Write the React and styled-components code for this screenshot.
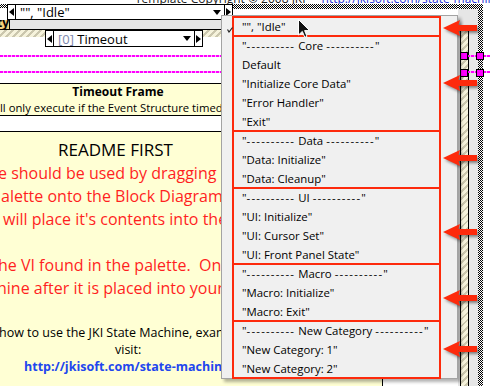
import React from 'react';
import styled, { createGlobalStyle } from 'styled-components';

const UI = '"Open Sans", "Noto Sans", "DejaVu Sans", sans-serif';
const RED = '#fd2a0c';
const NOTE = '#ffffd4';

const GlobalStyle = createGlobalStyle`
  html, body {
    margin: 0;
    padding: 0;
    background: #fff;
  }
  body {
    width: 490px;
    height: 386px;
    overflow: hidden;
    font-family: ${UI};
  }
`;

const checker = `
  background-color: #fff;
  background-image: repeating-conic-gradient(#000 0 25%, #fff 0 50%);
  background-size: 2px 2px;
`;

const hatch = `
  background: repeating-linear-gradient(135deg, #f6f3dc 0 3px, #cbc7ae 3px 5px);
`;

const Stage = styled.div`
  position: relative;
  width: 490px;
  height: 386px;
  overflow: hidden;
  display: flex;
  flex-direction: column;
`;

const TopStrip = styled.div`
  height: 4px;
  display: flex;
  align-items: flex-end;
  gap: 16px;
  padding-left: 135px;
  overflow: hidden;
  white-space: nowrap;
  font-size: 12px;
  line-height: 11px;
`;

const CopyText = styled.span`
  color: #222;
`;

const CopyLink = styled.span`
  color: #2b35d6;
`;

const Body = styled.div`
  flex: 1;
  display: flex;
  min-height: 0;
`;

const LeftPane = styled.div`
  width: 458px;
  display: flex;
  flex-direction: column;
  overflow: hidden;
`;

const SelectorRow = styled.div`
  height: 16px;
  display: flex;
  align-items: flex-start;
`;

const CornerChecker = styled.div`
  ${checker}
  width: 7px;
  height: 4px;
`;

const TopChecker = styled.div`
  ${checker}
  flex: 1;
  height: 5px;
`;

const Selector = styled.div`
  width: ${p => p.$width}px;
  height: ${p => p.$height}px;
  box-sizing: border-box;
  display: flex;
  border: 1px solid #000;
  background: #fff;
  flex-shrink: 0;
`;

const StepButton = styled.div`
  width: 7px;
  display: flex;
  align-items: center;
  justify-content: center;
  ${p => (p.$dir === 'left' ? 'border-right: 1px solid #000;' : 'border-left: 1px solid #000;')}
  &::before {
    content: '';
    border-top: 4px solid transparent;
    border-bottom: 4px solid transparent;
    ${p => (p.$dir === 'left' ? 'border-right: 5px solid #000;' : 'border-left: 5px solid #000;')}
  }
`;

const Field = styled.div`
  flex: 1;
  display: flex;
  align-items: center;
  justify-content: space-between;
  padding: 0 3px 0 4px;
  font-size: 13px;
  white-space: nowrap;
  color: #000;
  &::after {
    content: '';
    border-left: 4px solid transparent;
    border-right: 4px solid transparent;
    border-top: 5px solid #000;
  }
`;

const Index = styled.span`
  color: #7d87ad;
`;

const BarRow = styled.div`
  height: 10px;
  display: flex;
`;

const TyLabel = styled.div`
  width: 10px;
  box-sizing: border-box;
  background: #f2d27c;
  border-right: 1px solid #000;
  border-bottom: 1px solid #000;
  font-size: 12px;
  font-weight: 700;
  line-height: 5px;
  overflow: hidden;
  color: #000;
  display: flex;
  justify-content: flex-end;
`;

const GrayBar = styled.div`
  flex: 1;
  background: #e4e4e4;
  border-bottom: 1px solid #000;
`;

const TimeoutRow = styled.div`
  height: 17px;
  display: flex;
  align-items: flex-start;
`;

const HatchStrip = styled.div`
  ${hatch}
  height: 7px;
  ${p => (p.$width ? `width: ${p.$width}px;` : 'flex: 1;')}
`;

const WireArea = styled.div`
  height: 36px;
  box-sizing: border-box;
  padding-top: 8px;
  display: flex;
  flex-direction: column;
  gap: 14px;
`;

const Wire = styled.div`
  height: 2px;
  background: repeating-linear-gradient(90deg, #ff00ff 0 3px, #ffb3ff 3px 4px);
`;

const TimeoutFrame = styled.div`
  height: 33px;
  width: 383px;
  box-sizing: border-box;
  background: ${NOTE};
  border-top: 1px solid #000;
  border-bottom: 1px solid #000;
  border-right: 1px solid #000;
  font-size: 11.3px;
  line-height: 15.5px;
  color: #000;
  white-space: nowrap;
`;

const FrameTitle = styled.div`
  width: 236px;
  text-align: center;
  font-size: 12px;
  font-weight: 700;
`;

const Gap = styled.div`
  height: ${p => p.$h}px;
`;

const Readme = styled.div`
  flex: 1;
  width: 383px;
  box-sizing: border-box;
  background: ${NOTE};
  border-top: 1px solid #000;
  border-right: 1px solid #000;
  padding-top: 6px;
  white-space: pre;
  color: #000;
`;

const ReadmeTitle = styled.div`
  padding-left: 58px;
  font-size: 17px;
  line-height: 24px;
`;

const RedLine = styled.div`
  margin-left: ${p => p.$indent || 0}px;
  margin-top: ${p => p.$gap || 0}px;
  color: #ff1f1f;
  font-size: 16px;
  line-height: 23px;
`;

const InfoLine = styled.div`
  margin-left: ${p => p.$indent || 0}px;
  margin-top: ${p => p.$gap || 0}px;
  font-size: 12.5px;
  line-height: 17px;
`;

const Link = styled(InfoLine)`
  color: #2146ee;
  font-weight: 700;
`;

const Rail = styled.div`
  position: relative;
  width: 32px;
  display: flex;
  flex-direction: column;
`;

const RailTop = styled.div`
  height: 5px;
  display: flex;
`;

const RailChecker = styled.div`
  ${checker}
  width: ${p => p.$width}px;
`;

const RailBody = styled.div`
  flex: 1;
  display: flex;
`;

const RailGray = styled.div`
  width: ${p => p.$width}px;
  background: #e6e6e6;
`;

const RailBlank = styled.div`
  flex: 1;
  background: #fff;
`;

const BarColumn = styled.div`
  width: 9px;
  display: flex;
  flex-direction: column;
  background: #e6e6e6;
`;

const HatchBar = styled.div`
  ${hatch}
  flex: 1;
  margin-top: 21px;
  border: 1px solid #000;
  border-bottom: none;
`;

const Terminal = styled.div`
  position: absolute;
  left: ${p => p.$x}px;
  top: ${p => p.$y}px;
  width: 8px;
  height: 8px;
  box-sizing: border-box;
  background: #ff00ff;
  border: 1px solid #000;
`;

const RailWire = styled.div`
  position: absolute;
  left: ${p => p.$x}px;
  top: ${p => p.$y}px;
  width: ${p => p.$w}px;
  height: 2px;
  background: repeating-linear-gradient(90deg, #ff00ff 0 3px, #ffb3ff 3px 4px);
`;

const Menu = styled.div`
  position: absolute;
  left: 221px;
  top: 15px;
  width: 237px;
  height: 364px;
  box-sizing: border-box;
  padding: 1px 17px 0 11px;
  background: #f0f0f0;
  border: 1px solid #a3a3a3;
  box-shadow: 3px 3px 3px rgba(0, 0, 0, 0.3);
  font-family: ${UI};
  font-size: 11.4px;
  color: #000;
`;

const Group = styled.div`
  position: relative;
  outline: 2px solid ${RED};
  outline-offset: -1px;
`;

const Item = styled.div`
  position: relative;
  height: 19px;
  line-height: 19px;
  padding-left: 9px;
  white-space: pre;
`;

const Dashes = styled.span`
  letter-spacing: 1.2px;
`;

const Check = styled.svg`
  position: absolute;
  left: -6px;
  top: 10px;
`;

const Arrow = styled.svg`
  position: absolute;
  left: calc(100% + 3px);
  top: calc(50% + ${p => p.$dy}px);
  transform: translateY(-50%);
  filter: drop-shadow(2px 2px 1.5px rgba(0, 0, 0, 0.45));
  overflow: visible;
`;

const Cursor = styled.svg`
  position: absolute;
  left: 298px;
  top: 19px;
`;

const groups = [
  { dy: 1, items: ['"", "Idle"'] },
  { dy: -1, title: 'Core', items: ['Default', '"Initialize Core Data"', '"Error Handler"', '"Exit"'] },
  { dy: -2, title: 'Data', items: ['"Data: Initialize"', '"Data: Cleanup"'] },
  { dy: 6, title: 'UI', items: ['"UI: Initialize"', '"UI: Cursor Set"', '"UI: Front Panel State"'] },
  { dy: 5, title: 'Macro', items: ['"Macro: Initialize"', '"Macro: Exit"'] },
  { dy: -1, title: 'New Category', items: ['"New Category: 1"', '"New Category: 2"'] },
];

const RedArrow = ({ dy }) => (
  <Arrow $dy={dy} width="34" height="17" viewBox="0 0 34 17">
    <polygon points="0,8.5 17,0.5 15.5,5.5 34,5.5 34,11.5 15.5,11.5 17,16.5" fill={RED} />
  </Arrow>
);

const App = () => {
  return (
    <>
      <GlobalStyle />
      <Stage>
        <TopStrip>
          <CopyText>Template Copyright © 2008 JKI</CopyText>
          <CopyLink>http://jkisoft.com/state-machine</CopyLink>
        </TopStrip>
        <Body>
          <LeftPane>
            <SelectorRow>
              <CornerChecker />
              <Selector $width={226} $height={16}>
                <StepButton $dir="left" />
                <Field>"", "Idle"</Field>
                <StepButton $dir="right" />
              </Selector>
              <TopChecker />
            </SelectorRow>
            <BarRow>
              <TyLabel>ty</TyLabel>
              <GrayBar />
            </BarRow>
            <TimeoutRow>
              <HatchStrip $width={45} />
              <Selector $width={158} $height={17}>
                <StepButton $dir="left" />
                <Field>
                  <span>
                    <Index>[0]</Index> Timeout
                  </span>
                </Field>
                <StepButton $dir="right" />
              </Selector>
              <HatchStrip />
            </TimeoutRow>
            <WireArea>
              <Wire />
              <Wire />
            </WireArea>
            <TimeoutFrame>
              <FrameTitle>Timeout Frame</FrameTitle>
              <div>ll only execute if the Event Structure timed out.</div>
            </TimeoutFrame>
            <Gap $h={15} />
            <Readme>
              <ReadmeTitle>README FIRST</ReadmeTitle>
              <RedLine $indent={-2}>e should be used by dragging it from the</RedLine>
              <RedLine $indent={1}>alette onto the Block Diagram of a VI.</RedLine>
              <RedLine $indent={3}>will place it's contents into the VI.</RedLine>
              <RedLine $indent={-2} $gap={23}>he VI found in the palette.  Only edit the</RedLine>
              <RedLine $indent={-3}>hine after it is placed into your VI.</RedLine>
              <InfoLine $indent={-1} $gap={24}>how to use the JKI State Machine, examples and</InfoLine>
              <InfoLine $indent={115}>visit:</InfoLine>
              <Link $indent={24}>http://jkisoft.com/state-machine</Link>
            </Readme>
          </LeftPane>
          <Rail>
            <RailTop>
              <RailChecker $width={25} />
              <RailBlank />
            </RailTop>
            <RailBody>
              <RailGray $width={2} />
              <BarColumn>
                <HatchBar />
              </BarColumn>
              <RailGray $width={9} />
              <RailChecker $width={5} />
              <RailBlank />
            </RailBody>
            <RailWire $x={9} $y={51} $w={9} />
            <RailWire $x={25} $y={51} $w={7} />
            <RailWire $x={9} $y={67} $w={9} />
            <RailWire $x={25} $y={67} $w={7} />
            <Terminal $x={2} $y={48} />
            <Terminal $x={18} $y={48} />
            <Terminal $x={2} $y={65} />
            <Terminal $x={18} $y={65} />
          </Rail>
        </Body>

        <Menu>
          {groups.map((group, gi) => (
            <Group key={gi}>
              {group.title && (
                <Item>
                  "<Dashes>----------</Dashes> {group.title} <Dashes>----------</Dashes>"
                </Item>
              )}
              {group.items.map((label, ii) => (
                <Item key={ii}>
                  {gi === 0 && (
                    <Check width="6" height="6" viewBox="0 0 6 6">
                      <polyline points="0.5,2.5 2,5 5.5,0.5" fill="none" stroke="#222" strokeWidth="1.2" />
                    </Check>
                  )}
                  {label}
                </Item>
              ))}
              <RedArrow dy={group.dy} />
            </Group>
          ))}
        </Menu>

        <Cursor width="13" height="20" viewBox="0 0 13 20">
          <path
            d="M0.5 0.5 L0.5 16 L4.3 12.4 L6.8 18.3 L9 17.4 L6.6 11.6 L11.6 11.6 Z"
            fill="#111"
            stroke="#fff"
            strokeWidth="1"
          />
        </Cursor>
      </Stage>
    </>
  );
};

export default App;
